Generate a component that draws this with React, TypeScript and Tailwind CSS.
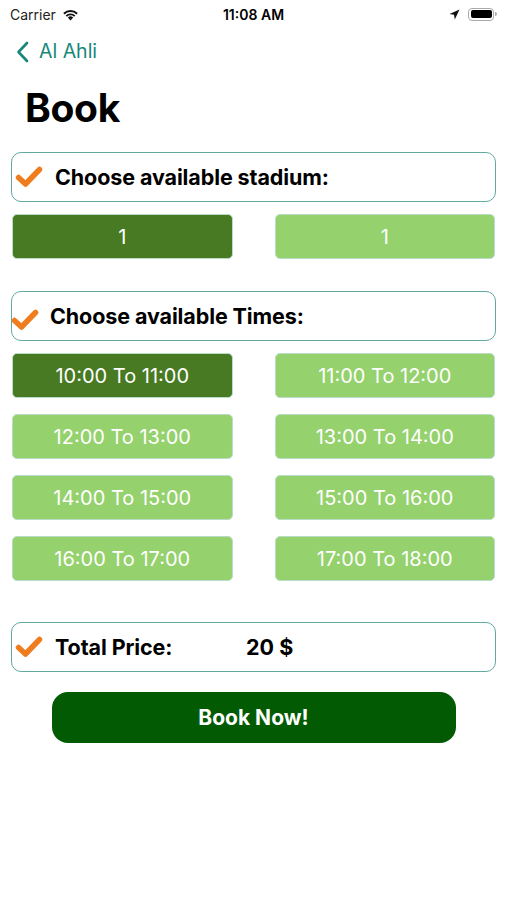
import React from "react";

const Check = ({ className = "" }: { className?: string }) => (
  <svg viewBox="0 0 28 22" className={className} width="28" height="22">
    <path d="M3.5 11.5 L10.5 18 L24.5 3.5" fill="none" stroke="#ef7d1d" strokeWidth="5.5" strokeLinecap="round" strokeLinejoin="round" />
  </svg>
);

const times = [
  "10:00 To 11:00",
  "11:00 To 12:00",
  "12:00 To 13:00",
  "13:00 To 14:00",
  "14:00 To 15:00",
  "15:00 To 16:00",
  "16:00 To 17:00",
  "17:00 To 18:00",
];

function Slot({ label, active }: { label: string; active?: boolean }) {
  return (
    <div
      className={`h-[45px] rounded-[5px] border border-[#b9dcc8] flex items-center justify-center text-white text-[20px] ${
        active ? "bg-[#477a22]" : "bg-[#95d16d]"
      }`}
    >
      {label}
    </div>
  );
}

export default function App() {
  return (
    <div className="w-[507px] h-[900px] bg-white text-black" style={{ fontFamily: "Inter, 'Noto Sans', sans-serif" }}>
      {/* status bar */}
      <div className="h-[28px] relative flex items-center px-[10px] text-[14px]">
        <span className="text-[#222]">Carrier</span>
        <svg className="ml-[6px]" width="17" height="13" viewBox="0 0 17 13">
          <path d="M8.5 12.5 L5.8 9.6 A4 4 0 0 1 11.2 9.6 Z" fill="#111" />
          <path d="M3.6 7.4 A7 7 0 0 1 13.4 7.4 L12 8.8 A5 5 0 0 0 5 8.8 Z" fill="#111" />
          <path d="M1.2 5 A10.5 10.5 0 0 1 15.8 5 L14.4 6.4 A8.5 8.5 0 0 0 2.6 6.4 Z" fill="#111" />
        </svg>
        <span className="absolute left-0 right-0 text-center font-semibold text-[14px] pointer-events-none">11:08 AM</span>
        <div className="ml-auto flex items-center gap-[8px]">
          <svg width="11" height="11" viewBox="0 0 11 11">
            <path d="M10.5 0.5 L0.5 5 L5 5.8 L5.8 10.5 Z" fill="#111" />
          </svg>
          <div className="flex items-center">
            <div className="w-[26px] h-[13px] rounded-[4px] border border-[#aaa] p-[1.5px]">
              <div className="w-full h-full rounded-[2px] bg-black" />
            </div>
            <div className="w-[2px] h-[4px] bg-[#aaa] rounded-r-sm ml-[1px]" />
          </div>
        </div>
      </div>

      {/* nav */}
      <div className="h-[48px] flex items-center pl-[16px] text-[#16877a]">
        <svg width="13" height="22" viewBox="0 0 13 22">
          <path d="M11 2 L2.5 11 L11 20" fill="none" stroke="#16877a" strokeWidth="2.6" strokeLinecap="round" strokeLinejoin="round" />
        </svg>
        <span className="ml-[10px] text-[19.5px]">Al Ahli</span>
      </div>

      {/* title */}
      <div className="h-[76px] flex items-center pl-[25px] pb-[12px]">
        <h1 className="text-[39px] font-bold tracking-[-0.3px]">Book</h1>
      </div>

      <div className="px-[11px]">
        <div className="h-[50px] rounded-[10px] border-[1.5px] border-[#62a9a1] flex items-center pl-[3px]">
          <Check />
          <span className="ml-[12px] text-[21.5px] font-bold tracking-[-0.1px]">Choose available stadium:</span>
        </div>
      </div>

      <div className="px-[12px] mt-[12px] grid grid-cols-2 gap-x-[42px]">
        <Slot label="1" active />
        <Slot label="1" />
      </div>

      <div className="px-[11px] mt-[32px]">
        <div className="h-[50px] rounded-[10px] border-[1.5px] border-[#62a9a1] flex items-center">
          <Check className="mt-[8px] -ml-[1px]" />
          <span className="ml-[11px] text-[21.5px] font-bold tracking-[-0.1px]">Choose available Times:</span>
        </div>
      </div>

      <div className="px-[12px] mt-[12px] grid grid-cols-2 gap-x-[42px] gap-y-[16px]">
        {times.map((t, i) => (
          <Slot key={t} label={t} active={i === 0} />
        ))}
      </div>

      <div className="px-[11px] mt-[41px]">
        <div className="h-[50px] rounded-[10px] border-[1.5px] border-[#62a9a1] flex items-center pl-[3px]">
          <Check />
          <span className="ml-[12px] text-[21.5px] font-bold tracking-[-0.1px] w-[191px]">Total Price:</span>
          <span className="text-[21.5px] font-bold">20 $</span>
        </div>
      </div>

      <div className="mt-[20px] flex justify-center">
        <button className="w-[404px] h-[51px] rounded-[16px] bg-[#025b02] text-white text-[21px] font-bold">
          Book Now!
        </button>
      </div>
    </div>
  );
}
